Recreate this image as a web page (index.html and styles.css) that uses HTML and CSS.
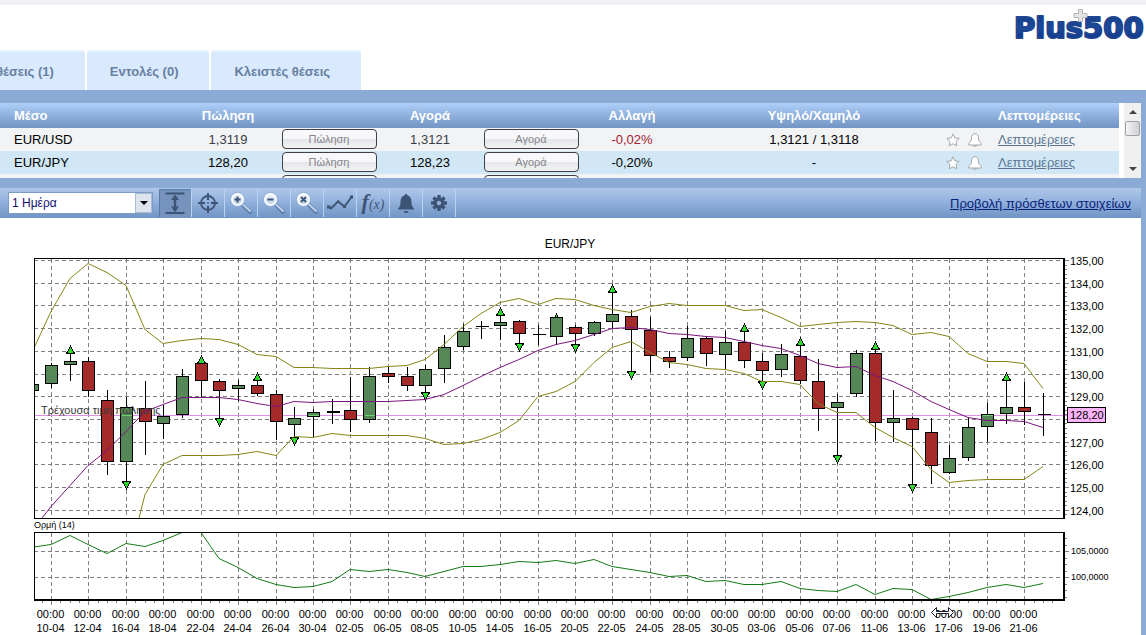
FILE: index.html
```html
<!DOCTYPE html>
<html lang="el">
<head>
<meta charset="utf-8">
<title>Plus500</title>
<link rel="stylesheet" href="styles.css">
</head>
<body>
<svg class="defs" aria-hidden="true">
  <defs>
    <linearGradient id="lens" x1="0" y1="0" x2="0" y2="1"><stop offset="0" stop-color="#f4f8fd"/><stop offset="1" stop-color="#b9cfea"/></linearGradient>
    <symbol id="star" viewBox="0 0 14 14"><path d="M7 .9 8.800 4.900 13.200 5.400 10 8.300 10.800 12.900 7 10.700 3.200 12.900 4 8.300 .8 5.400 5.200 4.900Z" fill="#fff" stroke="#a4a8ae"/></symbol>
    <symbol id="bell" viewBox="0 0 14 14"><path d="M5 12h4c0 1-1 1.500-2 1.500S5 13 5 12Z" fill="#fff" stroke="#a4a8ae"/><path d="M7 .7C9.400 .7 10.400 2.500 10.500 5c.1 3 1 4 2.800 5.300V12H.7v-1.700C2.500 9 3.400 8 3.500 5 3.600 2.500 4.600 .7 7 .7Z" fill="#fff" stroke="#a4a8ae"/></symbol>
    <symbol id="magnifier" viewBox="0 0 24 24"><path d="M14 14 21 21" stroke="#5d7ea9" stroke-width="4" stroke-linecap="round"/><path d="M14 13.500 21 20" stroke="#bfd2ea" stroke-width="2" stroke-linecap="round"/><circle cx="8.500" cy="8.500" r="7" fill="url(#lens)" stroke="#8fabd2"/><circle cx="8.500" cy="8.500" r="5.500" fill="none" stroke="#fff" stroke-width="1.500"/></symbol>
  </defs>
</svg>
<header class="top">
  <nav class="tabs">
    <button class="tab tab-cut">θέσεις (1)</button>
    <button class="tab">Εντολές (0)</button>
    <button class="tab">Κλειστές θέσεις</button>
  </nav>
  <svg class="logo" viewBox="0 0 132 38" role="img" aria-label="Plus500">
    <defs>
      <linearGradient id="blue" x1="0" y1="0" x2="0" y2="1"><stop offset="0" stop-color="#123a80"/><stop offset=".5" stop-color="#1d4a9c"/><stop offset="1" stop-color="#0a2a86"/></linearGradient>
    </defs>
    <text class="logo-text" x="0" y="31">Plus500</text>
    <path d="M64.500 2.500h4v4h4.500v4h-4.500v4h-4v-4H60v-4h4.500Z" fill="#e3e4e6" stroke="#b4b6ba"/>
  </svg>
</header>
<main class="panel">
  <section class="quotes">
    <table class="grid">
      <colgroup><col class="c-name"><col class="c-price"><col class="c-btn"><col class="c-price"><col class="c-btn"><col class="c-price"><col class="c-range"><col class="c-icons"><col class="c-more"></colgroup>
      <thead>
        <tr><th class="left">Μέσο</th><th>Πώληση</th><th></th><th>Αγορά</th><th></th><th>Αλλαγή</th><th>Υψηλό/Χαμηλό</th><th></th><th class="more">Λεπτομέρειες</th></tr>
      </thead>
      <tbody>
        <tr><td class="left">EUR/USD</td><td class="dim">1,3119</td><td class="act"><button class="trade">Πώληση</button></td><td class="dim">1,3121</td><td class="act"><button class="trade">Αγορά</button></td><td class="down">-0,02%</td><td>1,3121 / 1,3118</td>
          <td><span class="marks"><svg><use href="#star"/></svg><svg><use href="#bell"/></svg></span></td><td class="more"><a href="#">Λεπτομέρειες</a></td></tr>
        <tr class="selected"><td class="left">EUR/JPY</td><td>128,20</td><td class="act"><button class="trade">Πώληση</button></td><td>128,23</td><td class="act"><button class="trade">Αγορά</button></td><td>-0,20%</td><td>-</td>
          <td><span class="marks"><svg><use href="#star"/></svg><svg><use href="#bell"/></svg></span></td><td class="more"><a href="#">Λεπτομέρειες</a></td></tr>
        <tr><td></td><td></td><td class="act"><button class="trade" aria-label="Πώληση"></button></td><td></td><td class="act"><button class="trade" aria-label="Αγορά"></button></td><td></td><td></td><td></td><td></td></tr>
      </tbody>
    </table>
    <div class="scroll">
      <svg class="scroll-arrow" viewBox="0 0 8 5"><path d="M4 0 8 4H0Z" fill="#444"/></svg>
      <span class="thumb"></span>
      <svg class="scroll-arrow scroll-end" viewBox="0 0 8 5"><path d="M0 0H8L4 4Z" fill="#444"/></svg>
    </div>
  </section>
  <section class="toolbar">
    <div class="period">
      <select aria-label="Περίοδος"><option>1 Ημέρα</option></select>
      <span class="period-arrow"><svg viewBox="0 0 8 4"><path d="M0 0H8L4 4Z"/></svg></span>
    </div>
    <div class="tools">
      <button class="tool active" aria-label="Κλίμακα"><svg viewBox="0 0 24 24"><path d="M2.500 2.500h19M2.500 22h19" stroke="#3e5475" stroke-width="2"/><path d="M12 5v15" stroke="#3e5475" stroke-width="2.500"/><path d="M12 3.500 16 9H8ZM12 21 16 15.500H8Z" fill="#3e5475"/></svg></button>
      <button class="tool" aria-label="Σταυρόνημα"><svg viewBox="0 0 24 24"><circle cx="12" cy="12" r="7" fill="none" stroke="#3e5475" stroke-width="1.800"/><path d="M12 2v7M12 15v7M2 12h7M15 12h7M11.500 12h1" stroke="#3e5475" stroke-width="2"/></svg></button>
      <button class="tool" aria-label="Μεγέθυνση"><svg viewBox="0 0 24 24"><use href="#magnifier"/><path d="M5.500 8.500h6M8.500 5.500v6" stroke="#3e5475" stroke-width="2"/></svg></button>
      <button class="tool" aria-label="Σμίκρυνση"><svg viewBox="0 0 24 24"><use href="#magnifier"/><path d="M5.500 8.500h6" stroke="#3e5475" stroke-width="2"/></svg></button>
      <button class="tool" aria-label="Επαναφορά"><svg viewBox="0 0 24 24"><use href="#magnifier"/><path d="m6 6 5 5m0-5-5 5" stroke="#3e5475" stroke-width="2"/></svg></button>
      <button class="tool" aria-label="Γράφημα"><svg class="wide" viewBox="0 0 28 24"><path d="M1.500 15.500 5 17.500 12 10.500 18.500 15.500 25.500 6" fill="none" stroke="#3e5475" stroke-width="2"/><path d="M1 14.500h3.500v3H1ZM24 4.500h3v3h-3ZM11 9.500h2.500v2.500H11ZM17 14h3v3h-3Z" fill="#3e5475"/></svg></button>
      <button class="tool fx" aria-label="Δείκτες"><span class="fx-f">f</span><span class="fx-x">(x)</span></button>
      <button class="tool" aria-label="Ειδοποιήσεις"><svg viewBox="0 0 24 24"><path d="M12 3c1 0 1.500.6 1.500 1.600C17 5.500 17.500 8.500 17.500 11.500c0 3 .8 4.500 2.500 6v1H4v-1c1.700-1.500 2.500-3 2.500-6 0-3 .5-6 4-6.900C10.500 3.600 11 3 12 3ZM9.500 20h5c-.5 1.500-1.500 2-2.500 2s-2-.5-2.500-2Z" fill="#3e5475"/></svg></button>
      <button class="tool" aria-label="Ρυθμίσεις"><svg viewBox="0 0 24 24"><path d="M12 4v16M4 12h16M6.500 6.500l11 11M17.500 6.500l-11 11" stroke="#3e5475" stroke-width="3.500"/><circle cx="12" cy="12" r="5.500" fill="#3e5475"/><circle cx="12" cy="12" r="2.200" fill="#93b0da"/></svg></button>
    </div>
    <a class="extra" href="#">Προβολή πρόσθετων στοιχείων</a>
  </section>
  <section class="chart">
    <svg id="chart" viewBox="0 218 1141 417" role="img" aria-label="EUR/JPY"></svg>
  </section>
</main>
<script src="chart.js"></script>
</body>
</html>
```
FILE: styles.css
```css
* { box-sizing: border-box; }
body {
  margin: 0;
  background: #fff;
  font-family: "Liberation Sans", Arial, sans-serif;
  font-size: 13px;
  color: #000;
}
button, select { font-family: inherit; margin: 0; padding: 0; }
.defs { position: absolute; width: 0; height: 0; }

.top {
  display: flex;
  justify-content: space-between;
  align-items: flex-end;
  height: 90px;
  border-top: 5px solid #f0f1f5;
  overflow: hidden;
}
.tabs { display: flex; gap: 2px; }
.tab {
  height: 40px;
  padding: 0 31px 0 23px;
  border: 0;
  border-top: 2px solid #e6f1ff;
  border-radius: 3px 3px 0 0;
  background: #d9e9fe;
  color: #67809f;
  font-size: 13px;
  font-weight: bold;
}
.tab-cut { padding-left: 0; margin-left: -4px; }
.logo {
  width: 132px;
  height: 38px;
  align-self: flex-start;
  margin-top: 2px;
  overflow: visible;
}
.logo-text {
  font-family: "DejaVu Sans", sans-serif;
  font-weight: bold;
  font-size: 29px;
  fill: url(#blue);
  stroke: #1d4590;
  stroke-width: 2px;
  stroke-linejoin: round;
}

.panel { background: #8babd6; padding: 13px 5px 0 0; }
.quotes { display: flex; height: 75px; overflow: hidden; background: #fff; }
.grid {
  flex: 1;
  align-self: flex-start;
  table-layout: fixed;
  border-collapse: collapse;
  text-align: center;
}
.c-name { width: 177px; }
.c-price { width: 102px; }
.c-btn { width: 100px; }
.c-range { width: 262px; }
.c-icons { width: 46px; }
.c-more { width: 128px; }
.grid th, .grid td { padding: 0; }
.grid th {
  height: 25px;
  color: #fff;
  font-size: 13px;
}
.grid thead tr { background: linear-gradient(#b0d0fb, #8fb0dd 50%, #7295c4); }
.grid td { height: 23px; }
.grid tbody tr { background: #f1f3f5; }
.grid tbody tr.selected { background: #d1e7f5; }
.grid .left { text-align: left; padding-left: 14px; }
.grid .more { text-align: left; padding-left: 7px; }
.grid .dim { color: #3c3c46; }
.grid .down { color: #a52030; }
.grid .act { vertical-align: top; padding-top: 1px; }
.more a { color: #5a7694; }
.trade {
  display: block;
  width: 95px;
  height: 20px;
  margin: 0 auto;
  border: 1px solid #3c4048;
  border-radius: 4px;
  background: linear-gradient(#f8f8fa 50%, #e4e5e8 50%, #f3f3f5);
  color: #85858a;
  font-size: 11px;
}
.marks { display: flex; gap: 8px; padding-left: 1px; }
.marks svg { width: 14px; height: 14px; }
.scroll {
  display: flex;
  flex-direction: column;
  align-items: center;
  width: 17px;
  margin-left: 5px;
  padding: 7px 0 6px;
  background: #f0f0f1;
}
.scroll-arrow { width: 8px; height: 5px; }
.scroll-end { margin-top: auto; }
.thumb {
  width: 15px;
  height: 15px;
  margin-top: 6px;
  border: 1px solid #a0a0a4;
  border-radius: 2px;
  background: linear-gradient(90deg, #f4f4f5, #cfd0d4);
}

.toolbar {
  display: flex;
  align-items: center;
  height: 30px;
  margin-top: 10px;
  padding: 0 10px 0 8px;
  background: linear-gradient(#b0c8e9, #8fafdb 50%, #7094c4);
}
.period { position: relative; width: 145px; height: 22px; }
.period select {
  width: 100%;
  height: 100%;
  padding-left: 3px;
  border: 1px solid #7c9ac4;
  border-radius: 0;
  appearance: none;
  background: #fff;
  color: #101070;
  font-size: 12px;
}
.period-arrow {
  position: absolute;
  top: 1px;
  right: 1px;
  display: flex;
  align-items: center;
  justify-content: center;
  width: 17px;
  height: 20px;
  border: 1px solid #a9bcd8;
  background: #dde4ee;
  pointer-events: none;
}
.period-arrow svg { width: 8px; height: 4px; }
.tools { display: flex; margin-left: 6px; }
.tool {
  display: flex;
  align-items: center;
  justify-content: center;
  width: 33px;
  height: 28px;
  border: 0;
  border-right: 1px solid #b9d2f2;
  background: none;
  color: #3e5475;
}
.tool svg { width: 24px; height: 24px; }
.tool svg.wide { width: 28px; }
.tool.active { background: #7593bd; box-shadow: inset 1px 1px #5d7ba8; }
.fx { font-family: "Liberation Serif", serif; font-style: italic; align-items: baseline; }
.fx-f { font-size: 22px; font-weight: bold; }
.fx-x { font-size: 14px; }
.extra { margin-left: auto; color: #0a1f7a; }

.chart { background: #fff; }
.chart svg { display: block; width: 100%; height: auto; }
.frame, .grid-line, .tick, .candle, .wick, .arrow, .price-line { shape-rendering: crispEdges; }
.frame { stroke: #000; fill: none; }
.thick { stroke-width: 2; }
.grid-line { stroke: #808080; stroke-dasharray: 4 3; }
.tick { stroke: #808080; }
.wick { stroke: #000; }
.candle { stroke: #000; }
.rise { fill: #568756; }
.fall { fill: #a52a2a; }
.arrow { fill: #2bdc2b; stroke: #000; }
.price-line { stroke: #e08fe4; }
.price-line.over { stroke: #6fd06f; }
.line { fill: none; }
.band { stroke: #858518; }
.mean { stroke: #7a1480; }
.momentum { stroke: #147a14; }
.tag { fill: #fbb4fb; stroke: #000; shape-rendering: crispEdges; }
.label { font-size: 11px; }
.title { font-size: 12px; }
.tiny { font-size: 9px; }
.middle { text-anchor: middle; }
.muted { fill: #3a3a3a; }
.pointer { fill: #fff; stroke: #1a2230; }
```
FILE: chart.js
```js
const NS = "http://www.w3.org/2000/svg";
const svg = document.getElementById("chart");
const LEFT = 34, RIGHT = 1064;

function add(name, attrs, text) {
  const el = document.createElementNS(NS, name);
  for (const key in attrs) el.setAttribute(key, attrs[key]);
  if (text) el.textContent = text;
  svg.appendChild(el);
  return el;
}
const xAt = k => Math.floor(51.4 + 18.72 * k);
const line = (cls, x1, y1, x2, y2) => add("path", { class: cls, d: `M${x1} ${y1}L${x2} ${y2}` });

const clip = add("clipPath", { id: "plot" });
const area = document.createElementNS(NS, "path");
area.setAttribute("d", "M35 259H1063V518H35ZM35 533H1063V600H35Z");
clip.appendChild(area);

// Price grid and axis
for (let i = 0; i <= 11; i++) {
  const y = Math.round(260 + 22.7 * i) + 0.5;
  line("grid-line", LEFT, y, RIGHT, y);
  line("tick", 1065, y, 1069, y);
  for (let m = 1; m < 5; m++) {
    const my = Math.round(260 + 22.7 * (i + m / 5)) + 0.5;
    if (my < 518) line("tick", 1065, my, 1067, my);
  }
  if (i !== 7) add("text", { class: "label", x: 1070, y: y + 4 }, 135 - i + ",00");
}
[[551, "105,0000"], [577, "100,0000"]].forEach(([y, t]) => {
  line("grid-line", LEFT, y + 0.5, RIGHT, y + 0.5);
  line("tick", 1065, y + 0.5, 1069, y + 0.5);
  add("text", { class: "tiny", x: 1071, y: y + 3 }, t);
});
for (let y = 538.5; y < 600; y += 6.5) line("tick", 1065, y, 1067, y);

// Time grid and axis
const dates = "10-04 12-04 16-04 18-04 22-04 24-04 26-04 30-04 02-05 06-05 08-05 10-05 14-05 16-05 20-05 22-05 24-05 28-05 30-05 03-06 05-06 07-06 11-06 13-06 17-06 19-06 21-06".split(" ");
dates.forEach((date, i) => {
  const x = xAt(2 * i) + 0.5;
  line("grid-line", x, 259, x, 518);
  line("grid-line", x, 533, x, 600);
  line("tick", x, 601, x, 605);
  add("text", { class: "label middle", x: x - 1, y: 618 }, "00:00");
  add("text", { class: "label middle", x: x - 1, y: 632 }, date);
});
for (let k = -0.5; k < 54; k += 0.5) {
  const x = xAt(k) + 0.5;
  line("tick", x, 601, x, 603);
}

line("price-line", LEFT, 415.5, 1067, 415.5);

// [body top, body bottom, high, low, kind, arrow]; kind: g rise, r fall, d flat
const candles = [
  [384, 390, 384, 390, "g"], [365, 383, 363, 388, "g"], [361, 364, 346, 381, "g", "u"], [361, 390, 357, 397, "r"],
  [400, 461, 390, 475, "r"], [407, 461, 397, 489, "g", "d"], [408, 421, 381, 455, "r"], [416, 423, 405, 439, "g"],
  [376, 414, 369, 418, "g"], [363, 380, 356, 397, "r", "u"], [381, 390, 379, 426, "r", "d"], [385, 388, 380, 401, "g"],
  [385, 393, 373, 396, "r", "u"], [394, 421, 390, 440, "r"], [418, 424, 407, 445, "g", "d"], [412, 416, 409, 437, "g"],
  [411, 412, 399, 424, "d"], [410, 419, 377, 432, "r"], [376, 419, 367, 423, "g"], [373, 376, 367, 383, "r"],
  [376, 385, 367, 391, "r"], [369, 385, 365, 400, "g", "d"], [347, 368, 335, 383, "g"], [331, 346, 324, 350, "g"],
  [326, 326, 321, 339, "d"], [322, 325, 308, 340, "g", "u"], [321, 333, 320, 351, "r", "d"], [334, 334, 325, 345, "d"],
  [317, 336, 314, 345, "g", "u"], [327, 333, 325, 352, "r", "d"], [322, 333, 321, 336, "g"], [314, 321, 285, 328, "g", "u"],
  [316, 329, 310, 379, "r", "d"], [330, 355, 317, 372, "r"], [357, 361, 351, 368, "r"], [338, 357, 326, 361, "g"],
  [338, 353, 336, 366, "r"], [342, 354, 331, 369, "g"], [342, 360, 324, 368, "r", "u"], [361, 370, 353, 389, "r", "d"],
  [354, 369, 344, 377, "g"], [356, 380, 338, 384, "r", "u"], [381, 408, 359, 431, "r"], [402, 407, 394, 463, "g", "d"],
  [353, 393, 350, 397, "g"], [353, 422, 342, 441, "r", "u"], [418, 422, 390, 442, "g"], [418, 429, 417, 492, "r", "d"],
  [432, 465, 418, 484, "r"], [458, 472, 445, 474, "g"], [427, 457, 418, 461, "g"], [414, 426, 403, 442, "g"],
  [407, 413, 373, 424, "g", "u"], [407, 411, 382, 425, "r"], [414, 414, 393, 436, "d"]
];
candles.forEach(([top, bottom, high, low, kind, arrow], i) => {
  const x = xAt(i - 1) + 0.5;
  if (x > LEFT) line("wick", x, high, x, low);
  if (arrow === "u") add("path", { class: "arrow", d: `M${x} ${high}L${x + 4} ${high + 7.5}H${x - 4}Z` });
  if (arrow === "d") add("path", { class: "arrow", d: `M${x} ${low}L${x + 4} ${low - 7.5}H${x - 4}Z` });
  if (kind === "d") {
    for (let y = top; y <= bottom; y++) line("wick", x - 6, y + 0.5, x + 7, y + 0.5);
  } else {
    const left = Math.max(x - 6, LEFT + 0.5);
    add("rect", { class: "candle " + (kind === "g" ? "rise" : "fall"), x: left, y: top + 0.5, width: x + 6 - left, height: bottom - top });
    if (kind === "g" && top < 415 && bottom > 415) line("price-line over", left + 1, 415.5, x + 5, 415.5);
  }
});

function series(cls, first, start, values) {
  const points = values.map((y, i) => `${xAt(start + i)},${y + 0.5}`);
  add("polyline", { class: "line " + cls, "clip-path": "url(#plot)", points: first + " " + points.join(" ") });
}
series("band", "34,348", 0, [311, 278, 263, 272, 285, 329, 343, 340, 338, 339, 344, 354, 356, 367, 367, 368, 368, 368, 366, 365, 359, 344, 326, 313, 302, 298, 304, 298, 299, 305, 309, 312, 306, 303, 305, 305, 305, 310, 309, 317, 326, 324, 322, 321, 322, 325, 334, 332, 336, 353, 361, 361, 363, 388]);
series("band", "139,518", 5, [494, 464, 455, 455, 455, 454, 451, 455, 436, 437, 433, 435, 435, 435, 435, 438, 444, 443, 439, 432, 420, 396, 391, 381, 362, 347, 341, 352, 362, 364, 368, 369, 373, 381, 381, 384, 403, 412, 412, 427, 437, 446, 469, 482, 480, 479, 479, 479, 466]);
series("mean", "42,518", 0, [506, 485, 465, 450, 431, 411, 404, 397, 397, 397, 399, 403, 406, 401, 402, 401, 401, 401, 401, 400, 399, 394, 385, 376, 367, 359, 350, 344, 340, 334, 328, 327, 329, 333, 334, 336, 337, 341, 345, 348, 355, 363, 367, 366, 375, 381, 390, 401, 409, 417, 420, 420, 421, 427]);
series("momentum", "34,547", 0, [544, 535, 544, 553, 543, 546, 540, 532, 532, 558, 567, 578, 584, 587, 586, 581, 569, 571, 569, 572, 576, 571, 566, 566, 564, 561, 562, 560, 563, 559, 566, 569, 572, 576, 575, 581, 580, 584, 584, 581, 588, 590, 591, 584, 594, 588, 589, 599, 596, 592, 587, 584, 587, 583]);

// Frames
line("frame", LEFT, 258.5, 1065, 258.5);
line("frame", LEFT + 0.5, 258, LEFT + 0.5, 519);
line("frame", LEFT, 518.5, 1065, 518.5);
line("frame thick", 1064, 258, 1064, 519);
line("frame", LEFT, 532.5, 1065, 532.5);
line("frame", LEFT + 0.5, 532, LEFT + 0.5, 601);
line("frame thick", LEFT, 600, 1065, 600);
line("frame thick", 1064, 532, 1064, 601);

add("text", { class: "title middle", x: 570, y: 248 }, "EUR/JPY");
add("text", { class: "tiny", x: 34, y: 528 }, "Ορμή (14)");
add("text", { class: "label muted", x: 41, y: 414 }, "Τρέχουσα τιμή πώλησης");
add("rect", { class: "tag", x: 1067.5, y: 407.5, width: 38, height: 15 });
add("text", { class: "label", x: 1070, y: 419 }, "128,20");
add("path", { class: "pointer", d: "M931.5 612.5 936.5 607.5V611.5H948.5V607.5L953.5 612.5 948.5 617.5V613.5H936.5V617.5Z" });
```
